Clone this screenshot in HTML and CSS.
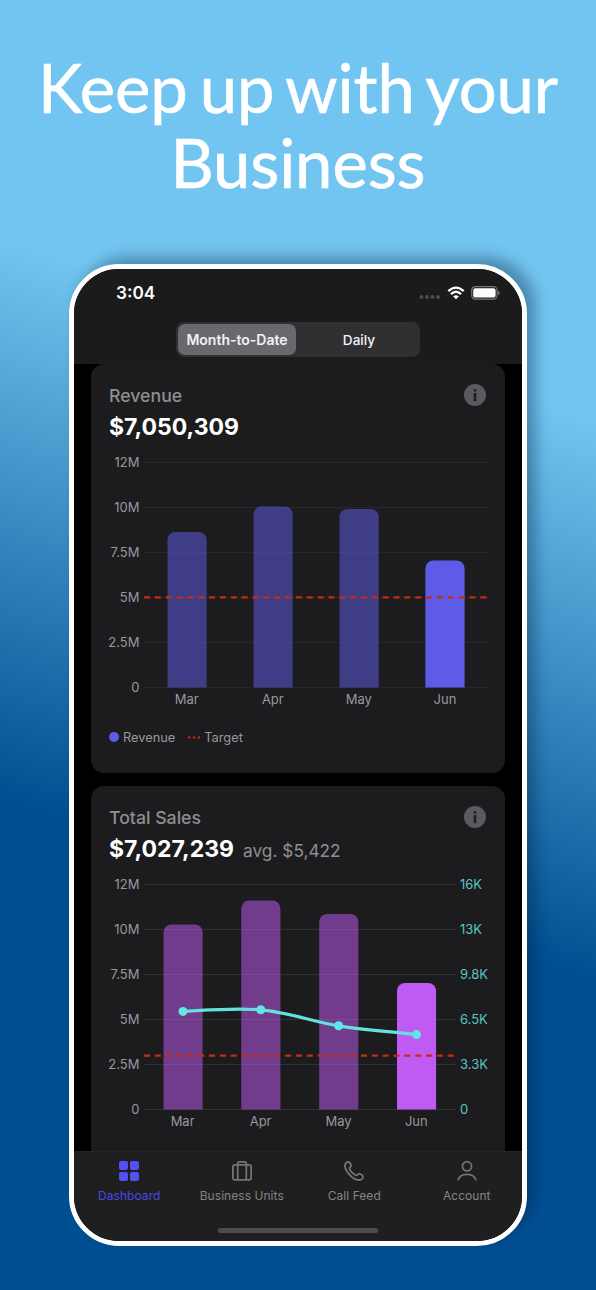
FILE: index.html
```
<!DOCTYPE html>
<html lang="en">
<head>
  <meta charset="UTF-8" />
  <meta name="viewport" content="width=device-width, initial-scale=1.0"/>
  <title>Keep up with your Business</title>
  <link rel="stylesheet" href="styles.css">
</head>
<body>

<h1 class="headline">Keep up with your<br>Business</h1>

<div class="phone">
  <header class="top-bar">
    <div class="status">
      <span class="time">3:04</span>
      <div class="status-icons">
        <svg class="dots" width="22" height="6" viewBox="0 0 22 6">
          <circle cx="2.5" cy="3" r="2"/><circle cx="8" cy="3" r="2"/><circle cx="13.5" cy="3" r="2"/><circle cx="19" cy="3" r="2"/>
        </svg>
        <svg class="wifi" width="18" height="14" viewBox="0 0 18 14">
          <path d="M1.3 5.2Q9-1.9 16.7 5.2M4 8.1Q9 3.5 14 8.1"/>
          <path class="wifi-base" d="M9 13.2L6.2 10.4Q9 8.1 11.8 10.4Z"/>
        </svg>
        <svg class="battery" width="29" height="14" viewBox="0 0 29 14">
          <rect class="battery-case" x=".7" y=".7" width="25.4" height="12.4" rx="3.6"/>
          <rect class="battery-level" x="2.2" y="2.2" width="22.4" height="9.4" rx="2.2"/>
          <path class="battery-tip" d="M27.2 4.8Q28.8 5.4 28.8 7T27.2 9.2Z"/>
        </svg>
      </div>
    </div>
    <div class="segmented">
      <button class="segment active">Month-to-Date</button>
      <button class="segment">Daily</button>
    </div>
  </header>

  <main class="feed">
    <section class="card">
      <div class="card-head">
        <h2>Revenue</h2>
        <svg class="info" width="22" height="22" viewBox="0 0 22 22">
          <circle cx="11" cy="11" r="11"/>
          <path d="M11 9V17.2"/><path d="M11 5.2V7.6"/>
        </svg>
      </div>
      <div class="total"><strong>$7,050,309</strong></div>
      <svg class="chart revenue" width="380" height="256" viewBox="0 0 380 256">
        <g class="axis left">
          <text x="30.5" y="15.3">12M</text>
          <text x="30.5" y="60.3">10M</text>
          <text x="30.5" y="105.3">7.5M</text>
          <text x="30.5" y="150.3">5M</text>
          <text x="30.5" y="195.3">2.5M</text>
          <text x="30.5" y="240.3">0</text>
        </g>
        <path class="grid" d="M35 10.5H379M35 55.5H379M35 100.5H379M35 145.5H379M35 190.5H379M35 235.5H379"/>
        <g class="bars">
          <path d="M58.5 235.5V88a8 8 0 0 1 8-8h23.2a8 8 0 0 1 8 8V235.5Z"/>
          <path d="M144.5 235.5V62.5a8 8 0 0 1 8-8h23.2a8 8 0 0 1 8 8V235.5Z"/>
          <path d="M230.5 235.5V65a8 8 0 0 1 8-8h23.2a8 8 0 0 1 8 8V235.5Z"/>
          <path class="current" d="M316.4 235.5V116.5a8 8 0 0 1 8-8h23.2a8 8 0 0 1 8 8V235.5Z"/>
        </g>
        <path class="target" d="M35 145.4H379"/>
        <g class="axis months">
          <text x="77.8" y="252.3">Mar</text>
          <text x="163.8" y="252.3">Apr</text>
          <text x="249.8" y="252.3">May</text>
          <text x="336" y="252.3">Jun</text>
        </g>
      </svg>
      <div class="legend">
        <svg width="10" height="10" viewBox="0 0 10 10"><circle class="legend-dot" cx="5" cy="5" r="5"/></svg>
        <span>Revenue</span>
        <svg class="legend-dash" width="12" height="3" viewBox="0 0 12 3"><path d="M0 1.5H12"/></svg>
        <span>Target</span>
      </div>
    </section>

    <section class="card">
      <div class="card-head">
        <h2>Total Sales</h2>
        <svg class="info" width="22" height="22" viewBox="0 0 22 22">
          <circle cx="11" cy="11" r="11"/>
          <path d="M11 9V17.2"/><path d="M11 5.2V7.6"/>
        </svg>
      </div>
      <div class="total"><strong>$7,027,239</strong><span>avg. $5,422</span></div>
      <svg class="chart sales" width="380" height="256" viewBox="0 0 380 256">
        <g class="axis left">
          <text x="30.5" y="15.3">12M</text>
          <text x="30.5" y="60.3">10M</text>
          <text x="30.5" y="105.3">7.5M</text>
          <text x="30.5" y="150.3">5M</text>
          <text x="30.5" y="195.3">2.5M</text>
          <text x="30.5" y="240.3">0</text>
        </g>
        <g class="axis right">
          <text x="351" y="15.3">16K</text>
          <text x="351" y="60.3">13K</text>
          <text x="351" y="105.3">9.8K</text>
          <text x="351" y="150.3">6.5K</text>
          <text x="351" y="195.3">3.3K</text>
          <text x="351" y="240.3">0</text>
        </g>
        <path class="grid" d="M35 10.5H347M35 55.5H347M35 100.5H347M35 145.5H347M35 190.5H347M35 235.5H347"/>
        <g class="bars">
          <path d="M54.5 235.5V58.5a8 8 0 0 1 8-8h23.1a8 8 0 0 1 8 8V235.5Z"/>
          <path d="M132.3 235.5V34.5a8 8 0 0 1 8-8h23.1a8 8 0 0 1 8 8V235.5Z"/>
          <path d="M210.2 235.5V48a8 8 0 0 1 8-8h23.1a8 8 0 0 1 8 8V235.5Z"/>
          <path class="current" d="M288 235.5V117a8 8 0 0 1 8-8h23.1a8 8 0 0 1 8 8V235.5Z"/>
        </g>
        <path class="target" d="M35 181.6H347"/>
        <path class="trend" d="M74 137.4C100 136 126 133.7 151.8 135.8C178 138 204 147.6 229.6 151.8C256 156 282 157.7 307.5 160.6"/>
        <g class="points">
          <circle cx="74" cy="137.4" r="4.5"/>
          <circle cx="151.8" cy="135.8" r="4.5"/>
          <circle cx="229.6" cy="151.8" r="4.5"/>
          <circle cx="307.5" cy="160.6" r="4.5"/>
        </g>
        <g class="axis months">
          <text x="73.6" y="252.3">Mar</text>
          <text x="151.6" y="252.3">Apr</text>
          <text x="229.5" y="252.3">May</text>
          <text x="307.3" y="252.3">Jun</text>
        </g>
      </svg>
    </section>
  </main>

  <nav class="tab-bar">
    <a class="tab active">
      <svg width="22" height="22" viewBox="0 0 22 22">
        <rect x="1" y="1" width="9" height="9" rx="2"/><rect x="12" y="1" width="9" height="9" rx="2"/>
        <rect x="1" y="12" width="9" height="9" rx="2"/><rect x="12" y="12" width="9" height="9" rx="2"/>
      </svg>
      <span>Dashboard</span>
    </a>
    <a class="tab">
      <svg width="22" height="22" viewBox="0 0 22 22">
        <rect x="1.9" y="4.9" width="18.2" height="15" rx="1.8"/>
        <path d="M6.7 19.9V3.6Q6.7 1.9 8.4 1.9H13.6Q15.3 1.9 15.3 3.6V19.9"/>
      </svg>
      <span>Business Units</span>
    </a>
    <a class="tab">
      <svg width="22" height="22" viewBox="0 0 22 22">
        <path d="M5.2 1.9C6.4 2 8 4.4 8.1 5.7C8.2 6.9 6.3 7.3 6.5 8.7C6.8 10.7 11 15 13.2 15.4C14.7 15.6 15 13.6 16.2 13.7C17.6 13.9 20.1 15.6 20.1 16.7C20 18.4 18.1 20 16.2 20C10.3 19.9 1.9 11.6 1.9 5.6C1.9 3.8 3.6 1.9 5.2 1.9Z"/>
      </svg>
      <span>Call Feed</span>
    </a>
    <a class="tab">
      <svg width="22" height="22" viewBox="0 0 22 22">
        <circle cx="11" cy="6.3" r="4.6"/>
        <path d="M2 20.3C4 12.3 18 12.3 20 20.3"/>
      </svg>
      <span>Account</span>
    </a>
    <div class="home-indicator"></div>
  </nav>
</div>

</body>
</html>
```
FILE: styles.css
```
* {
  box-sizing: border-box;
  margin: 0;
  padding: 0;
}

body {
  width: 596px;
  height: 1290px;
  overflow: hidden;
  display: flex;
  flex-direction: column;
  align-items: center;
  font-family: Inter, sans-serif;
  background: linear-gradient(197deg, #72c5f0 28.5%, #004f92 66.5%);
}

svg {
  display: block;
  flex: none;
}

.headline {
  height: 264px;
  padding-top: 50px;
  font-family: Lato, sans-serif;
  font-size: 67px;
  font-weight: 400;
  line-height: 75px;
  letter-spacing: -0.1px;
  word-spacing: -5px;
  -webkit-text-stroke: 0.6px #fff;
  text-align: center;
  white-space: nowrap;
  color: #fff;
}

.phone {
  width: 458px;
  height: 982px;
  border: 5px solid #fff;
  border-radius: 50px;
  overflow: hidden;
  background: #000;
  display: flex;
  flex-direction: column;
  box-shadow: 9px -7px 14px rgba(0, 30, 60, 0.35);
}

.top-bar {
  height: 95px;
  flex: none;
  background: #1b1b1b;
}

.status {
  height: 53px;
  padding: 0 22px 0 42px;
  display: flex;
  align-items: center;
  justify-content: space-between;
  color: #fff;
}

.time {
  font-size: 17.2px;
  font-weight: 600;
  margin-top: -7px;
}

.status-icons {
  display: flex;
  align-items: center;
  gap: 6px;
  margin-top: -5px;
}

.dots {
  fill: #4b4b4d;
  margin-top: 8px;
}

.wifi path {
  fill: none;
  stroke: #fff;
  stroke-width: 2.3;
}

.wifi .wifi-base {
  fill: #fff;
  stroke: none;
}

.battery-case {
  fill: none;
  stroke: #77777a;
  stroke-width: 1.2;
}

.battery-level {
  fill: #fff;
}

.battery-tip {
  fill: #77777a;
}

.segmented {
  width: 244px;
  height: 35px;
  margin: 0 auto;
  padding: 2px;
  border-radius: 8px;
  background: #303033;
  display: flex;
}

.segment {
  flex: 1;
  padding-left: 4px;
  border: 0;
  border-radius: 7px;
  background: none;
  color: #f2f2f4;
  font: 500 13.6px Inter, sans-serif;
  white-space: nowrap;
}

.segment.active {
  flex: none;
  width: 118px;
  padding: 0;
  background: #69686e;
  font-size: 14px;
  font-weight: 600;
}

.feed {
  flex: 1;
  min-height: 0;
  overflow: hidden;
  padding: 0 17px;
}

.card {
  height: 409px;
  margin-bottom: 13px;
  padding: 20px 17px 0 18px;
  border-radius: 13px;
  background: #1c1c1e;
}

.card-head {
  height: 22px;
  display: flex;
  align-items: center;
  justify-content: space-between;
  padding-right: 2px;
}

.card-head h2 {
  font-size: 17.7px;
  font-weight: 500;
  color: #8e8e93;
}

.info circle {
  fill: #5b5a60;
}

.info path {
  fill: none;
  stroke: #1f1f21;
  stroke-width: 2.6;
}

.total {
  height: 42px;
  display: flex;
  align-items: baseline;
  gap: 9px;
  line-height: 42px;
}

.total strong {
  font-size: 23px;
  font-weight: 700;
  color: #fff;
}

.total span {
  font-size: 17.3px;
  color: #8e8e93;
}

.chart {
  margin-top: 4px;
  overflow: visible;
}

.axis text {
  font-size: 13px;
  fill: #98989d;
}

.axis.left text {
  text-anchor: end;
}

.axis.right text {
  fill: #63e6e2;
  fill-opacity: 0.85;
}

.axis.months text {
  text-anchor: middle;
}

.grid {
  stroke: #fff;
  stroke-opacity: 0.05;
}

.sales .grid {
  stroke-opacity: 0.09;
}

.bars path {
  fill-opacity: 0.52;
}

.bars .current {
  fill-opacity: 1;
}

.revenue .bars {
  fill: #5e5ce6;
}

.sales .bars {
  fill: #bf5af2;
}

.target {
  stroke: #c82b14;
  stroke-width: 2.2;
  stroke-dasharray: 6 4.85;
}

.trend {
  fill: none;
  stroke: #63e0e0;
  stroke-width: 3.2;
}

.points {
  fill: #63e6e2;
}

.legend {
  margin-top: 19px;
  height: 20px;
  display: flex;
  align-items: center;
  font-size: 12.8px;
  color: #98989d;
}

.legend span {
  margin-left: 4px;
}

.legend-dot {
  fill: #5e5ce6;
}

.legend-dash {
  margin-left: 13px;
  stroke: #c82b14;
  stroke-width: 2;
  stroke-dasharray: 2.4 2.4;
}

.tab-bar {
  position: relative;
  height: 90px;
  flex: none;
  padding: 8px 0 0;
  border-top: 1px solid #252527;
  background: #1f1f1f;
  display: flex;
  margin: 0 -1px;
}

.tab {
  flex: 1;
  display: flex;
  flex-direction: column;
  align-items: center;
  gap: 6px;
  font-size: 12px;
  letter-spacing: 0.05px;
  white-space: nowrap;
  color: #848488;
}

.tab svg {
  fill: none;
  stroke: #747478;
  stroke-width: 1.8;
}

.tab.active {
  color: #5046e8;
}

.tab.active svg {
  fill: #5350f5;
  stroke: none;
}

.home-indicator {
  position: absolute;
  left: 145px;
  bottom: 8px;
  width: 160px;
  height: 5px;
  border-radius: 3px;
  background: #4d4d4d;
}
```
